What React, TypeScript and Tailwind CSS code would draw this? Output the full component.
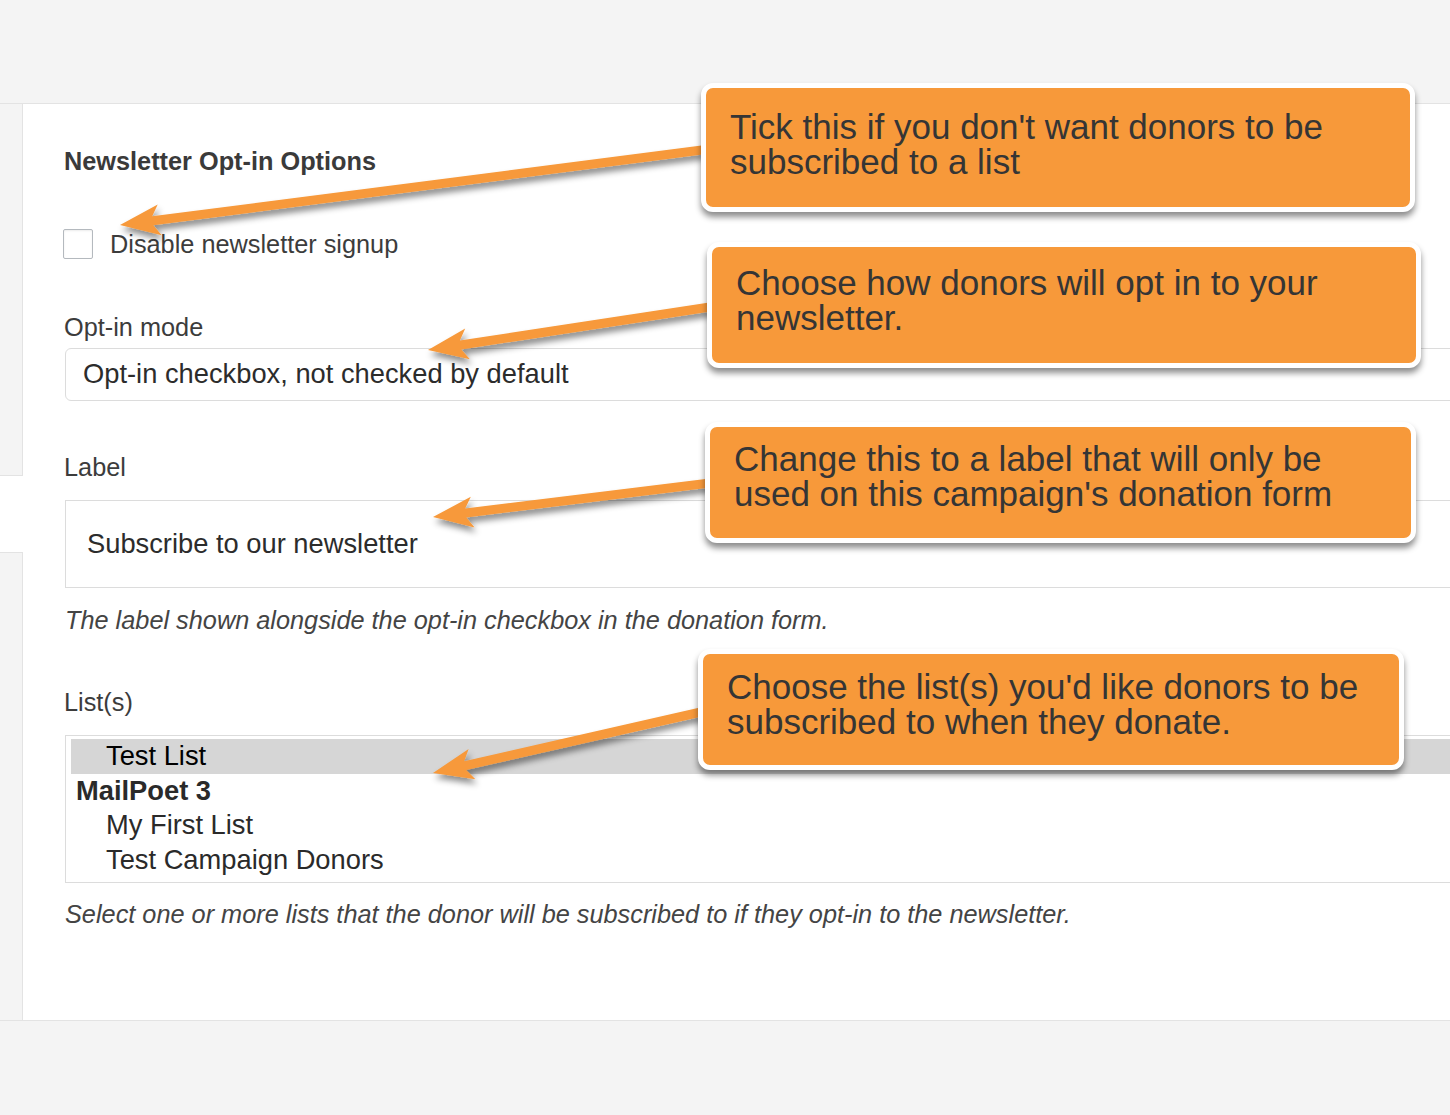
import React from 'react';

type Pt = [number, number];

// arrow shape from tip to tail, barbed head
function arrowPoints(tip: Pt, tail: Pt, headLen = 40, headHalf = 15.5, shaft = 4.5, notch = 7) {
  const dx = tail[0] - tip[0];
  const dy = tail[1] - tip[1];
  const len = Math.hypot(dx, dy);
  const ux = dx / len;
  const uy = dy / len;
  const nx = -uy;
  const ny = ux;
  const p = (a: number, b: number): string =>
    `${(tip[0] + ux * a + nx * b).toFixed(1)},${(tip[1] + uy * a + ny * b).toFixed(1)}`;
  return [
    p(0, 0),
    p(headLen, headHalf),
    p(headLen - notch, shaft),
    p(len, shaft),
    p(len, -shaft),
    p(headLen - notch, -shaft),
    p(headLen, -headHalf),
  ].join(' ');
}

const arrows: { tip: Pt; tail: Pt }[] = [
  { tip: [120, 225], tail: [702, 150] },
  { tip: [428, 350], tail: [710, 307] },
  { tip: [433, 517], tail: [710, 483] },
  { tip: [433, 773], tail: [701, 712] },
];

const callouts = [
  { left: 701, top: 83, w: 714, h: 129, pt: 21, lines: ["Tick this if you don't want donors to be", 'subscribed to a list'] },
  { left: 707, top: 242, w: 714, h: 126, pt: 18, lines: ['Choose how donors will opt in to your', 'newsletter.'] },
  { left: 705, top: 422, w: 711, h: 121, pt: 14, lines: ['Change this to a label that will only be', "used on this campaign's donation form"] },
  { left: 698, top: 649, w: 706, h: 121, pt: 15, lines: ["Choose the list(s) you'd like donors to be", 'subscribed to when they donate.'] },
];

function Callout({ left, top, w, h, pt, lines }: (typeof callouts)[number]) {
  return (
    <div
      className="absolute rounded-[12px] border-[5px] border-white bg-[#f7993a] pl-[24px] shadow-[0_5px_6px_rgba(0,0,0,0.45)]"
      style={{ left, top, width: w, height: h, paddingTop: pt }}
    >
      {lines.map((l) => (
        <div key={l} className="whitespace-nowrap text-[35px] leading-[35px] text-[#353535]">
          {l}
        </div>
      ))}
    </div>
  );
}

export default function App() {
  return (
    <div className="relative h-[1115px] w-[1450px] overflow-hidden bg-[#f4f4f4] font-['Liberation_Sans',Arial,sans-serif]">
      <div className="h-[103px]" />
      <div className="flex h-[918px] border-y border-[#e3e3e3]">
        {/* left tab strip */}
        <div className="flex w-[23px] shrink-0 flex-col">
          <div className="h-[372px] border-b border-r border-[#e3e3e3] bg-[#f4f4f4]" />
          <div className="h-[76px] bg-white" />
          <div className="flex-1 border-r border-t border-[#e3e3e3] bg-[#f4f4f4]" />
        </div>

        <div className="flex-1 bg-white pl-[41px] text-[25.3px] text-[#3c3c3c]">
          <h3 className="mt-[42px] text-[25.3px] font-bold leading-[30px] text-[#3a3a3a]">Newsletter Opt-in Options</h3>

          <label className="mt-[53px] flex h-[30px] items-center">
            <span className="-ml-px h-[30px] w-[30px] rounded-[2px] border border-[#b4b9be] bg-white shadow-[inset_0_1px_2px_rgba(0,0,0,0.08)]" />
            <span className="ml-[17px] leading-[30px]">Disable newsletter signup</span>
          </label>

          <div className="mt-[53px] leading-[30px]">Opt-in mode</div>
          <div className="mr-[-20px] mt-[6px] ml-px flex h-[53px] items-center rounded-[6px] border border-[#dcdcdc] pl-[17px] text-[27.3px] text-[#2c2c2c]">
            Opt-in checkbox, not checked by default
          </div>

          <div className="mt-[51px] leading-[30px]">Label</div>
          <div className="mr-[-20px] mt-[18px] ml-px flex h-[88px] items-center border border-[#dcdcdc] pl-[21px] text-[27.3px] text-[#2c2c2c]">
            Subscribe to our newsletter
          </div>
          <p className="mt-[17px] ml-px italic leading-[30px] text-[#444]">
            The label shown alongside the opt-in checkbox in the donation form.
          </p>

          <div className="mt-[52px] leading-[30px]">List(s)</div>
          <div className="mr-[-20px] mt-[18px] ml-px h-[148px] border border-[#dcdcdc] pl-[5px] pt-[3px] text-[27.3px] text-[#2a2a2a]">
            <div className="h-[34.5px] bg-[#d6d6d6] pl-[35px] leading-[34.5px] text-black">Test List</div>
            <div className="h-[34.5px] pl-[5px] font-bold leading-[34.5px]">MailPoet 3</div>
            <div className="h-[34.5px] pl-[35px] leading-[34.5px]">My First List</div>
            <div className="h-[34.5px] pl-[35px] leading-[34.5px]">Test Campaign Donors</div>
          </div>
          <p className="mt-[16px] ml-px italic leading-[30px] text-[#444]">
            Select one or more lists that the donor will be subscribed to if they opt-in to the newsletter.
          </p>
        </div>
      </div>

      <svg className="pointer-events-none absolute left-0 top-0" width="1450" height="1115">
        <defs>
          <filter id="ash" x="-10%" y="-50%" width="120%" height="200%">
            <feDropShadow dx="2" dy="5" stdDeviation="3" floodColor="#000" floodOpacity="0.45" />
          </filter>
        </defs>
        {arrows.map((a, i) => (
          <polygon key={i} points={arrowPoints(a.tip, a.tail)} fill="#f7993a" filter="url(#ash)" />
        ))}
      </svg>

      {callouts.map((c) => (
        <Callout key={c.lines[0]} {...c} />
      ))}
    </div>
  );
}
